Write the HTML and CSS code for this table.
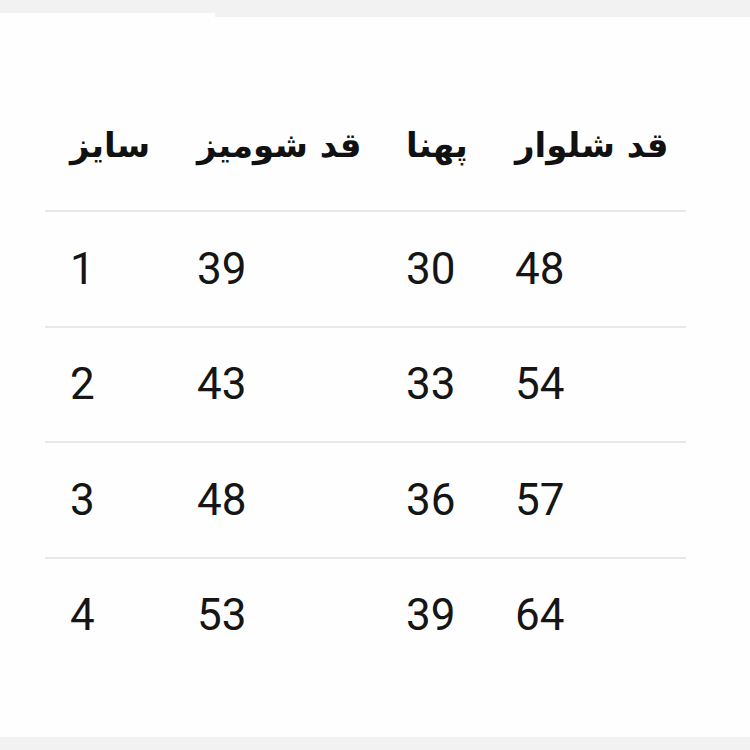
FILE: index.html
```html
<!DOCTYPE html>
<html>
<head>
<meta charset="utf-8">
<link rel="stylesheet" href="styles.css">
</head>
<body>
<div class="topbar"><div class="top-left"></div><div class="top-right"></div></div>
<main class="page">
  <div class="table">
    <div class="row head">
      <div class="cell" dir="rtl">سایز</div>
      <div class="cell" dir="rtl">قد شومیز</div>
      <div class="cell" dir="rtl">پهنا</div>
      <div class="cell" dir="rtl">قد شلوار</div>
    </div>
    <div class="row"><div class="cell">1</div><div class="cell">39</div><div class="cell">30</div><div class="cell">48</div></div>
    <div class="row"><div class="cell">2</div><div class="cell">43</div><div class="cell">33</div><div class="cell">54</div></div>
    <div class="row"><div class="cell">3</div><div class="cell">48</div><div class="cell">36</div><div class="cell">57</div></div>
    <div class="row last"><div class="cell">4</div><div class="cell">53</div><div class="cell">39</div><div class="cell">64</div></div>
  </div>
</main>
<div class="bottombar"></div>
</body>
</html>
```
FILE: styles.css
```css
html, body {
  margin: 0;
  padding: 0;
  background: #fefefe;
  width: 750px;
  height: 750px;
  overflow: hidden;
}
body {
  display: flex;
  flex-direction: column;
}
.topbar {
  display: flex;
  height: 17px;
  flex: none;
}
.top-left {
  width: 215px;
  height: 13px;
  background: #f2f2f2;
}
.top-right {
  flex: 1;
  height: 17px;
  background: #f2f2f2;
}
.page {
  flex: 1;
  padding: 79px 0 0 45px;
}
.table {
  width: 641px;
}
.row {
  display: grid;
  grid-template-columns: 127px 209px 109px 196px;
  height: 113.5px;
  align-items: center;
  border-bottom: 2px solid #e8e8e8;
  font-family: Roboto, "Liberation Sans", sans-serif;
  font-size: 44px;
  color: #151515;
}
.row.head {
  height: 114px;
  padding-bottom: 0;
  font-family: "DejaVu Sans", sans-serif;
  font-weight: bold;
  font-size: 34px;
  color: #111;
}
.row.head .cell {
  padding-bottom: 16px;
}
.row.last {
  border-bottom: none;
}
.cell {
  padding-left: 25px;
  text-align: left;
}
.bottombar {
  height: 13px;
  background: #f2f2f2;
  flex: none;
}
```
